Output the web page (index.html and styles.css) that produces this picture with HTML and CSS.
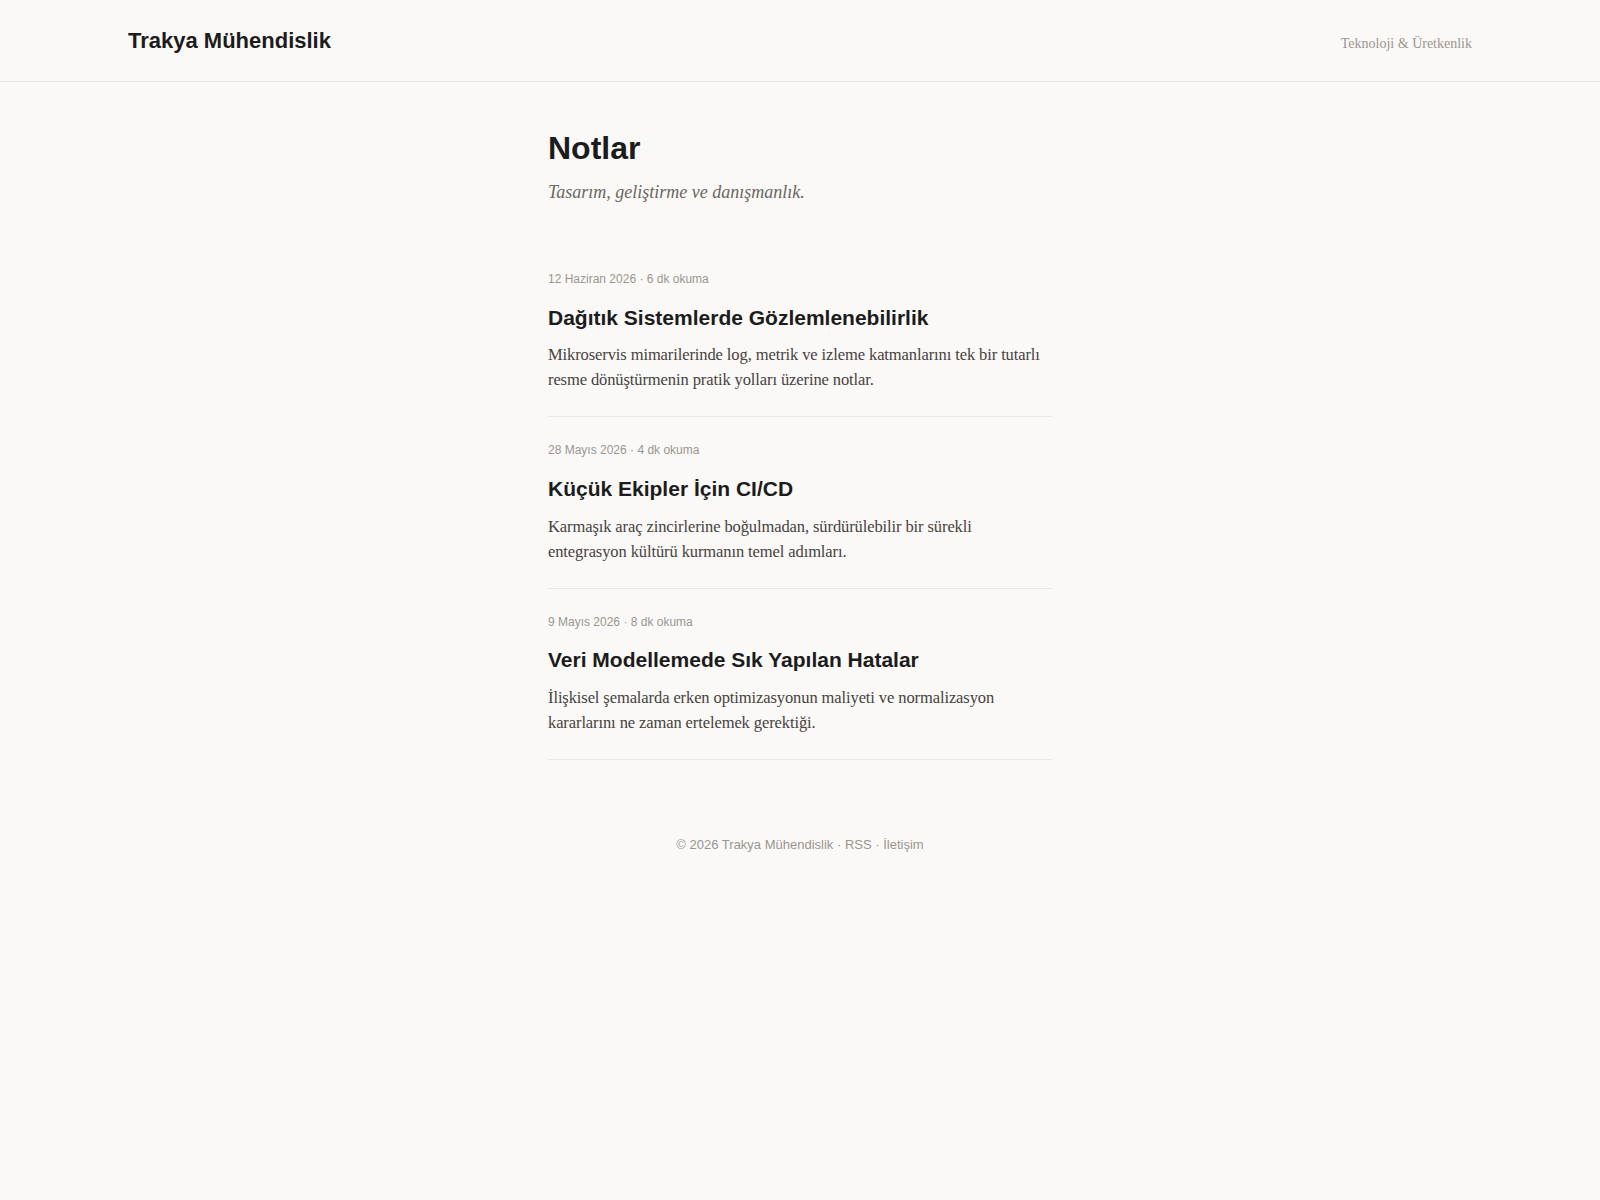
FILE: index.html
```html
<!DOCTYPE html>
<html lang="tr">
<head>
<meta charset="utf-8">
<title>Notlar — Trakya Mühendislik</title>
<link rel="stylesheet" href="styles.css">
</head>
<body>
<header class="site-header">
  <a class="logo" href="#">Trakya Mühendislik</a>
  <span class="tagline">Teknoloji &amp; Üretkenlik</span>
</header>
<main class="content">
  <h1 class="page-title">Notlar</h1>
  <p class="page-subtitle">Tasarım, geliştirme ve danışmanlık.</p>
  <section class="posts">
    <article class="post">
      <div class="post-meta">12 Haziran 2026 · 6 dk okuma</div>
      <h2 class="post-title">Dağıtık Sistemlerde Gözlemlenebilirlik</h2>
      <p class="post-excerpt">Mikroservis mimarilerinde log, metrik ve izleme katmanlarını tek bir tutarlı resme dönüştürmenin pratik yolları üzerine notlar.</p>
    </article>
    <article class="post">
      <div class="post-meta">28 Mayıs 2026 · 4 dk okuma</div>
      <h2 class="post-title">Küçük Ekipler İçin CI/CD</h2>
      <p class="post-excerpt">Karmaşık araç zincirlerine boğulmadan, sürdürülebilir bir sürekli entegrasyon kültürü kurmanın temel adımları.</p>
    </article>
    <article class="post">
      <div class="post-meta">9 Mayıs 2026 · 8 dk okuma</div>
      <h2 class="post-title">Veri Modellemede Sık Yapılan Hatalar</h2>
      <p class="post-excerpt">İlişkisel şemalarda erken optimizasyonun maliyeti ve normalizasyon kararlarını ne zaman ertelemek gerektiği.</p>
    </article>
  </section>
</main>
<footer class="site-footer">© 2026 Trakya Mühendislik · RSS · İletişim</footer>
</body>
</html>
```
FILE: styles.css
```css
* { box-sizing: border-box; }
html, body { margin: 0; padding: 0; }
body {
  background: #faf9f7;
  color: #222;
  font-family: "Liberation Serif", "DejaVu Serif", serif;
}
.site-header {
  height: 82px;
  padding: 0 8%;
  display: flex;
  align-items: center;
  justify-content: space-between;
  border-bottom: 1px solid #e4e2de;
}
.logo {
  font-family: "Liberation Sans", Arial, sans-serif;
  font-weight: 700;
  font-size: 22px;
  color: #1c1c1c;
  text-decoration: none;
}
.tagline {
  font-size: 14px;
  color: #9b958f;
  margin-top: 7px;
}
.content {
  width: 504px;
  margin: 0 auto;
  padding-top: 47px;
}
.page-title {
  margin: 0;
  font-family: "Liberation Sans", Arial, sans-serif;
  font-weight: 700;
  font-size: 32px;
  line-height: 1.2;
  color: #1c1c1c;
}
.page-subtitle {
  margin: 12px 0 0;
  font-style: italic;
  font-size: 18px;
  line-height: 27px;
  color: #6b6661;
}
.posts { margin-top: 40px; }
.post {
  padding: 25px 0 24px;
  border-bottom: 1px solid #ebe9e5;
}
.post-meta {
  font-family: "Liberation Sans", Arial, sans-serif;
  font-size: 12px;
  line-height: 16.8px;
  color: #9b958f;
}
.post-title {
  margin: 16px 0 0;
  font-family: "Liberation Sans", Arial, sans-serif;
  font-weight: 700;
  font-size: 21px;
  line-height: 27.3px;
  color: #1c1c1c;
}
.post-excerpt {
  margin: 11px 0 0;
  font-size: 16.5px;
  letter-spacing: -0.1px;
  line-height: 25px;
  color: #46423e;
}
.site-footer {
  margin-top: 75px;
  text-align: center;
  font-family: "Liberation Sans", Arial, sans-serif;
  font-size: 13px;
  line-height: 19.5px;
  color: #9b958f;
}
```
